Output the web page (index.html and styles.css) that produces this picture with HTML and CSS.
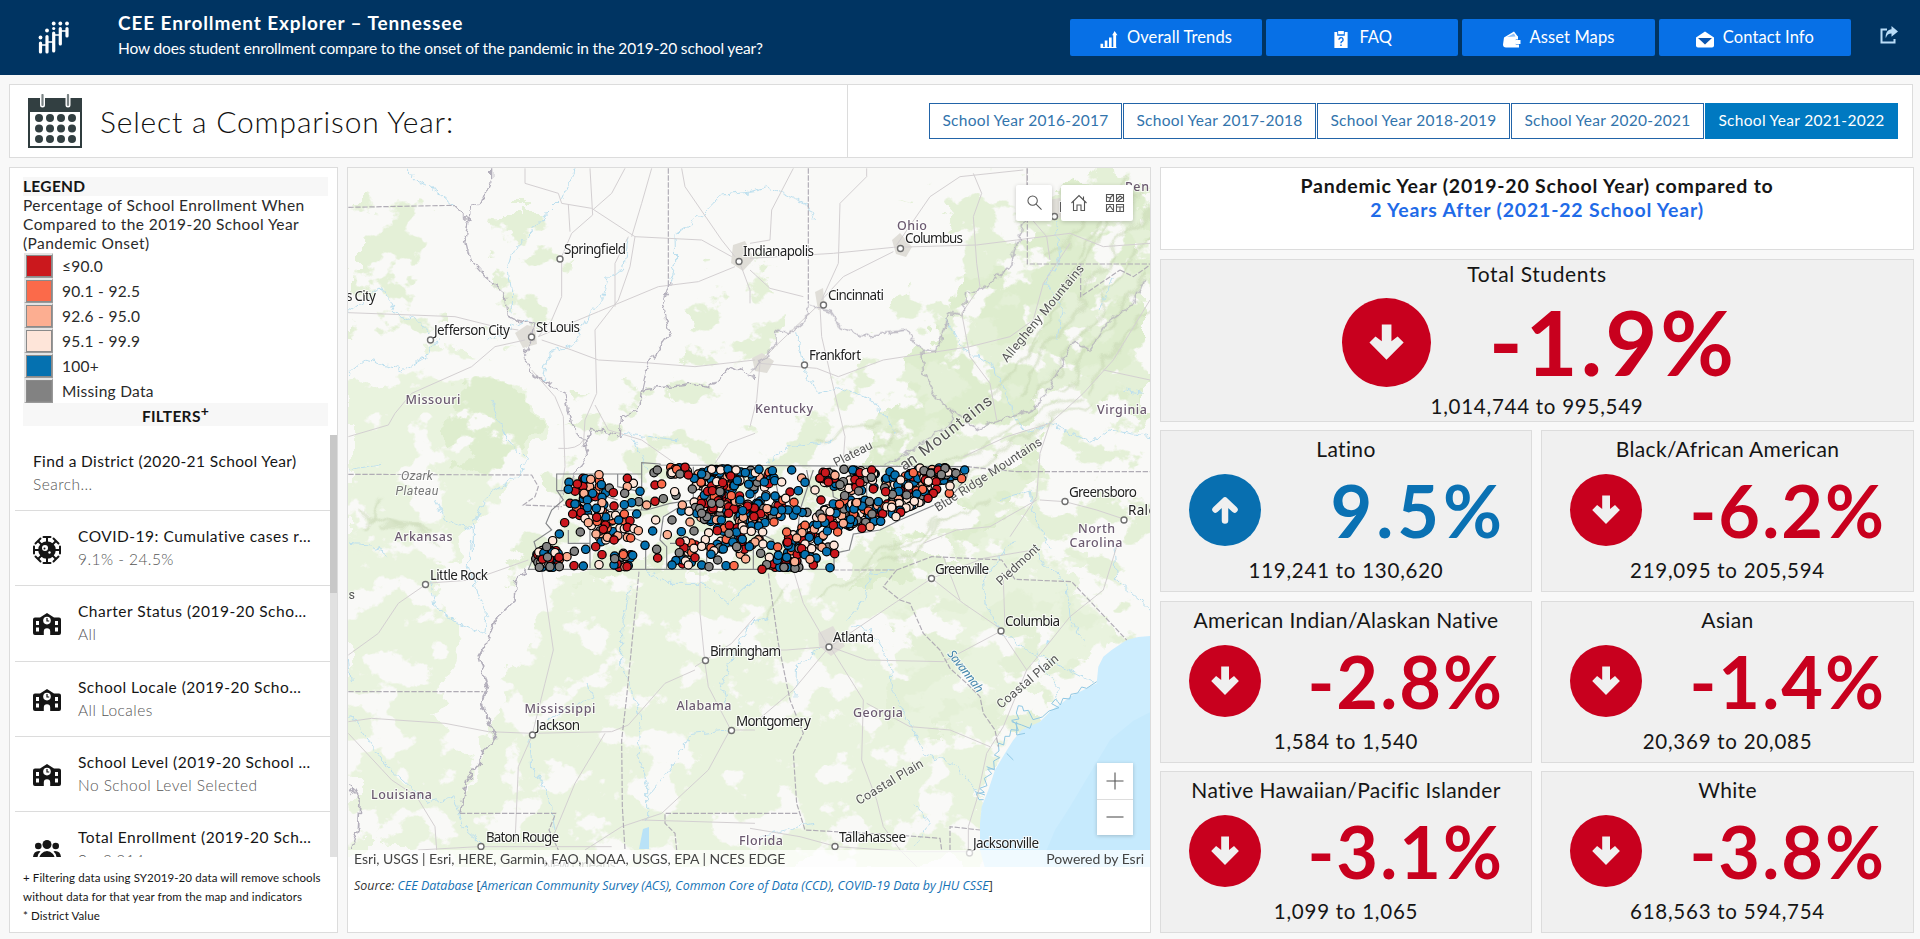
FILE: index.html
```html
<!DOCTYPE html>
<html lang="en">
<head>
<meta charset="utf-8">
<title>CEE Enrollment Explorer – Tennessee</title>
<link rel="stylesheet" href="styles.css">
</head>
<body>
<svg class="defs" width="0" height="0">
  <symbol id="school" viewBox="0 0 28 24"><path fill="#151515" d="M0 6.500a2 2 0 0 1 2-2h5L14 0l7 4.500h5a2 2 0 0 1 2 2V20a2 2 0 0 1-2 2h-8.800v-3.600a3.200 3.200 0 0 0-6.400 0V22H2a2 2 0 0 1-2-2z"/><circle cx="14" cy="7.600" r="3.800" fill="#fff"/><path d="M14 5v3h2.200" stroke="#151515" stroke-width="1.200" fill="none"/><path fill="#fff" d="M3 8h3v4H3zM3 14.500h3v4H3zM22 8h3v4h-3zM22 14.500h3v4h-3z"/></symbol>
  <symbol id="down" viewBox="0 0 72 72"><circle cx="36" cy="36" r="36" fill="#c8001e"/><path fill="#f0f0f0" d="M32.200 21.500h7.800v13.400l5-3.800 4.900 5L36 50 22.200 36.100l4.900-5 5.100 3.800z"/></symbol>
  <symbol id="up" viewBox="0 0 72 72"><circle cx="36" cy="36" r="36" fill="#086fb0"/><path fill="none" stroke="#f0f0f0" stroke-width="6.500" stroke-linecap="round" stroke-linejoin="round" d="M36 46.500V28M26.500 35.500L36 26.500l9.500 9"/></symbol>
</svg>

<header class="top">
  <svg class="logo" viewBox="0 0 34 34"><g stroke="#fff" stroke-linecap="round" stroke-width="3.200"><path d="M2.500 22v9M9 15.500V31M15.700 12v18M22.300 7.500v15.500M29 7.500v7.500"/></g><path d="M2.500 24h6M9 21h7M16 14h6M22 10h7" stroke="#fff" stroke-width="1.500"/><g fill="#fff"><circle cx="2.500" cy="16.500" r="1.900"/><circle cx="9" cy="9.500" r="1.900"/><circle cx="15.700" cy="2.500" r="1.900"/><circle cx="15.700" cy="7.500" r="1.600"/><circle cx="22.300" cy="2.500" r="1.900"/><circle cx="29" cy="2.500" r="1.900"/></g></svg>
  <div class="titles">
    <h1>CEE Enrollment Explorer – Tennessee</h1>
    <p>How does student enrollment compare to the onset of the pandemic in the 2019-20 school year?</p>
  </div>
  <nav class="links">
    <a><svg viewBox="0 0 16 16"><path fill="#fff" d="M0 12h2.500v3H0zM4 9h2.500v6H4zM8 6h2.500v9H8zM12 3h2.700v12H12zM11 4l2.300-4L16 4zM0 15h15v1H0z"/></svg><span class="n1">Overall Trends</span></a>
    <a><svg viewBox="0 0 16 18"><path fill="#fff" d="M1 1h3v4h8V1h3v17H1zM5 0h6v3.500H5z"/><path d="M5.800 9.200a2.200 2.200 0 1 1 3 2.100q-.8.400-.8 1.700M8 14.300v1.500" fill="none" stroke="#0a6fe6" stroke-width="1.500"/></svg><span>FAQ</span></a>
    <a><svg viewBox="0 0 18 16"><path fill="#fff" d="M1 6L11 0l3 4 1 1v3h-2a3 3 0 0 0 0 5h3v3H3a3 3 0 0 1-3-3zM13 8.500h4.500v4H13a2 2 0 0 1 0-4z"/><path d="M4 5.500l7-3.500 1.500 3z" fill="#8dbff8"/></svg><span>Asset Maps</span></a>
    <a><svg viewBox="0 0 18 16"><path fill="#fff" d="M0 6l9-6 9 6v8a2 2 0 0 1-2 2H2a2 2 0 0 1-2-2z"/><path fill="#0a55b0" d="M2 6.500h14L9 13z"/></svg><span>Contact Info</span></a>
  </nav>
  <svg class="share" viewBox="0 0 18 18"><path d="M7 3.500H1.500v13h13V13" fill="none" stroke="#b9dcf7" stroke-width="2"/><path fill="#b9dcf7" d="M11.500 0L18 5.500l-6.500 5.300V7.600C8.500 7.600 7 9 5.800 12.200 5 7 8 3.300 11.500 3.200z"/></svg>
</header>

<section class="selector">
  <div class="prompt">
    <svg class="cal" viewBox="0 0 54 54"><rect x="1" y="5" width="52" height="48" fill="#fff" stroke="#2f3c3e" stroke-width="2"/><path fill="#323f41" d="M0 4h54v14H0z"/><path d="M14.500 0v11M40 0v11" stroke="#fff" stroke-width="5" stroke-linecap="round"/><path d="M14.500 1v10M40 1v10" stroke="#7b8485" stroke-width="2.200" stroke-linecap="round"/><g fill="#323f41"><circle cx="11" cy="24" r="4"/><circle cx="22" cy="24" r="4"/><circle cx="33" cy="24" r="4"/><circle cx="44" cy="24" r="4"/><circle cx="11" cy="34.500" r="4"/><circle cx="22" cy="34.500" r="4"/><circle cx="33" cy="34.500" r="4"/><circle cx="44" cy="34.500" r="4"/><circle cx="11" cy="45" r="4"/><circle cx="22" cy="45" r="4"/><circle cx="33" cy="45" r="4"/><circle cx="44" cy="45" r="4"/></g></svg>
    <h2>Select a Comparison Year:</h2>
  </div>
  <div class="years">
    <button>School Year 2016-2017</button><button>School Year 2017-2018</button><button>School Year 2018-2019</button><button>School Year 2020-2021</button><button class="on">School Year 2021-2022</button>
  </div>
</section>

<main class="board">
  <aside class="side">
    <div class="legend">
      <h3>LEGEND</h3>
      <p>Percentage of School Enrollment When<br>Compared to the 2019-20 School Year<br>(Pandemic Onset)</p>
      <ul>
        <li><i class="sw c1"></i>≤90.0</li>
        <li><i class="sw c2"></i>90.1 - 92.5</li>
        <li><i class="sw c3"></i>92.6 - 95.0</li>
        <li><i class="sw c4"></i>95.1 - 99.9</li>
        <li><i class="sw c5"></i>100+</li>
        <li><i class="sw c6"></i>Missing Data</li>
      </ul>
      <h3 class="mid">FILTERS<sup>+</sup></h3>
    </div>
    <div class="filters">
      <div class="list">
        <div class="item first"><div><b>Find a District (2020-21 School Year)</b><span>Search...</span></div></div>
        <div class="item"><svg viewBox="0 0 28 28"><circle cx="14" cy="14" r="8.800" fill="#151515"/><g stroke="#151515" stroke-width="2" fill="none"><path d="M14 1v26M1 14h26M5 5l18 18M23 5L5 23"/><path d="M10.500 1h7M10.500 27h7M1 10.500v7M27 10.500v7M2.500 7.500l5-5M20.500 2.500l5 5M2.500 20.500l5 5M20.500 25.500l5-5" stroke-linecap="round"/></g><circle cx="12" cy="12" r="3" fill="#fff"/><circle cx="11.500" cy="12.500" r="1" fill="#151515"/><circle cx="16.500" cy="16.500" r="1.200" fill="#fff"/></svg><div><b>COVID-19: Cumulative cases r…</b><span>9.1% - 24.5%</span></div></div>
        <div class="item"><svg viewBox="0 0 28 24"><use href="#school"/></svg><div><b>Charter Status (2019-20 Scho…</b><span>All</span></div></div>
        <div class="item"><svg viewBox="0 0 28 24"><use href="#school"/></svg><div><b>School Locale (2019-20 Scho…</b><span>All Locales</span></div></div>
        <div class="item"><svg viewBox="0 0 28 24"><use href="#school"/></svg><div><b>School Level (2019-20 School …</b><span>No School Level Selected</span></div></div>
        <div class="item"><svg viewBox="0 0 28 22"><g fill="#151515"><circle cx="14" cy="4.500" r="4.500"/><circle cx="5.300" cy="6" r="3.300"/><circle cx="22.700" cy="6" r="3.300"/><path d="M6 20a8 9 0 0 1 16 0zM0 17q.5-6 6-6l1.500.500Q4.500 14 4.500 17zM28 17q-.5-6-6-6l-1.500.500q3 2.500 3 5.500z"/></g></svg><div><b>Total Enrollment (2019-20 Sch…</b><span>0 - 2,314</span></div></div>
      </div>
      <div class="track"><div class="thumb"></div></div>
    </div>
    <p class="notes">+ Filtering data using SY2019-20 data will remove schools<br>without data for that year from the map and indicators<br>* District Value</p>
  </aside>

  <section class="mapcard">
    <div class="map">
      <svg class="basemap" viewBox="348 168 802 699" width="802" height="699">
        <defs>
          <filter id="dense" x="348" y="168" width="802" height="699" filterUnits="userSpaceOnUse"><feTurbulence type="fractalNoise" baseFrequency=".022 .026" numOctaves="5" seed="8" result="n"/><feColorMatrix in="n" values="0 0 0 0 0  0 0 0 0 0  0 0 0 0 0  20 0 0 0 -8" result="m"/><feDisplacementMap in="SourceGraphic" in2="n" scale="60" xChannelSelector="G" yChannelSelector="B" result="d"/><feComposite in="d" in2="m" operator="in"/></filter>
          <filter id="sparse" x="348" y="168" width="802" height="699" filterUnits="userSpaceOnUse"><feTurbulence type="fractalNoise" baseFrequency=".024 .03" numOctaves="5" seed="21" result="n"/><feColorMatrix in="n" values="0 0 0 0 0  0 0 0 0 0  0 0 0 0 0  20 0 0 0 -10.600" result="m"/><feDisplacementMap in="SourceGraphic" in2="n" scale="60" xChannelSelector="G" yChannelSelector="B" result="d"/><feComposite in="d" in2="m" operator="in"/></filter>
          <filter id="ridges" x="348" y="168" width="802" height="699" filterUnits="userSpaceOnUse"><feGaussianBlur stdDeviation="1" result="b"/><feTurbulence type="fractalNoise" baseFrequency=".03" numOctaves="3" seed="3" result="n"/><feDisplacementMap in="b" in2="n" scale="26" xChannelSelector="R" yChannelSelector="G"/></filter>
          <filter id="wiggle" x="348" y="168" width="802" height="699" filterUnits="userSpaceOnUse"><feTurbulence type="fractalNoise" baseFrequency=".13" numOctaves="2" seed="5" result="n"/><feDisplacementMap in="SourceGraphic" in2="n" scale="9" xChannelSelector="R" yChannelSelector="G"/></filter>
        </defs>
        <path fill="#f9f9f7" d="M348 168h802v699H348z"/>
        <g fill="#e9f3de" filter="url(#dense)">
          <path d="M348 385L400 365L440 345L500 352L530 385L552 415L540 445L520 475L500 500L470 530L462 555L400 545L348 540z"/>
          <path d="M348 540L430 545L450 565L440 600L465 640L460 665L440 690L435 720L470 760L480 850H348z"/>
          <path d="M540 580L640 568L860 570L900 540L980 500L1020 520L1080 560L1110 640L1000 720L985 800L980 867H440L470 780L500 700L530 640z"/>
        </g>
        <g fill="#deedce" filter="url(#dense)">
          <path d="M965 280L1010 245L1080 185L1150 175L1150 420L1090 400L1040 390L990 440L920 470L860 470L905 400L915 350L945 310z"/>
          <path d="M850 590L880 560L960 500L1030 440L1060 420L1000 520L940 560L890 590z"/>
          <path d="M455 380L500 365L530 390L548 418L520 460L490 475L450 460z"/>
        </g>
        <g fill="#e4f0d7" filter="url(#sparse)">
          <path d="M348 200H440V340H348zM500 210H560V330H490z"/>
          <path d="M570 390H660L780 440L900 300L960 210L900 190L1150 168V620L1080 560L960 560L900 480H560z"/>
          <path d="M690 260L760 270L770 340L720 410L680 400z"/>
          <path d="M880 560H1150V640L1090 680L1000 740H900z"/>
          <path d="M560 470L960 460L880 570L500 580z"/>
        </g>
        <g fill="none" stroke="#c3d3ad" stroke-width="2.500" opacity=".6" filter="url(#ridges)">
          <path d="M1142 185L1090 250L1048 320L1020 370M1150 200L1105 262L1060 335L1015 395M1150 235L1110 290L1070 350L1030 400M1150 270L1105 330L1060 390M1085 215L1050 260M1150 300L1120 345L1085 390M1130 180L1075 260M1040 345L990 400M1090 400L1020 440L960 480L900 515M1080 395L1000 435L940 470M900 540L860 570M920 545L880 570M940 520L890 552M870 570L810 600M960 515L915 545M990 500L930 530M790 590L770 620M820 440L880 425M850 455L905 430M385 500L365 530M360 510L440 540M380 525L430 530"/>
        </g>
        <g fill="#e0ded8"><path d="M515 333l12-8 8 2 2 17-14 4zM733 245l12-4 9 18-11 12-12-8zM892 240l8-7 12 14-6 10-10-3zM815 292l8-4 2 20-7 2zM752 358l10-5 12 8-7 12-12-2zM818 633l15-7 12 20-14 10-12-10zM1048 200l12-2 5 18-12 4z"/></g>

        <g transform="translate(750 540) scale(.33333)">
          <path fill="#cdedfe" d="M1203 288L1165 291L1130 300L1085 330L1060 350L1045 380L1040 430L1000 450L960 470L935 490L905 510L870 545L815 570L790 600L765 640L735 690L715 750L695 800L690 850L690 930L705 985L1203 985z"/>
          <path fill="#c6eafd" d="M1203 515L1150 542L1080 600L1020 700L960 800L915 870L890 930L880 985H1203z"/>
          <path fill="none" stroke="#8fc7e3" stroke-width="3" d="M1040 425l-30 20-15-4-12 18-20 4-4 14-20-2-8 20-14-18-12 14 22 12-30 10-20 18-28 8-14-28-14 2-4-14-12-2-6 22 8 18-22 4 12 10 8 20-22-2-4 20-14 0-4 26-16-6 2 24-14 12 16 8-18 10 2 24-20 0 12 14-22 14 8 22-22 8 14 12-24 4 8 18 14 0"/>
          <path fill="none" stroke="#8fc7e3" stroke-width="3" d="M785 545l30 10 25 10 5-15M800 545l0 40 25-5M770 640l20 20M735 690l-25-10M705 765l-30-10"/>
        </g>

        <g class="river" filter="url(#wiggle)">
          <g transform="translate(345 160) scale(.33333)"><path d="M185 25L215 60L290 105L330 140M690 25L650 115L615 150L550 225L505 270L490 330L500 400L498 460M1230 95L1130 105L1070 170L990 220L992 310L975 370M850 230L835 330L790 350L770 420L730 460L690 550L610 580L595 660M10 640L60 600L170 630L240 590L280 535M10 458L110 380L150 460L215 480L250 520M430 545L500 500L550 480M440 720L480 830L545 900L520 950L430 1000L385 1090L385 1170M10 930L110 910M270 1020L300 1080L380 1110M860 830L910 930M830 820L1000 840"/></g>
          <g transform="translate(750 160) scale(.33333)"><path d="M0 95L55 80L170 130L195 180M140 520L165 640L210 700L260 680L370 720L440 820M590 480L640 570L720 610L760 680L790 770L830 820L900 790L960 820L1030 845L1080 810L1200 830M1090 350L1050 450M920 180L930 300L885 370L940 450L920 540M50 910L120 860L250 840M750 1020L840 990L855 1080L900 1160M1180 700L1120 690"/></g>
          <g transform="translate(345 540) scale(.33333)"><path d="M380 0L370 80L425 230L420 280L340 250L270 200L255 110M10 10L80 15L130 50M855 140L830 270L830 370L870 480L890 540L880 640L905 740L905 840M1230 240L1190 290L1130 430L1150 510M1150 570L1040 580L980 680L910 770M555 600L560 680L610 760L630 870M10 520L120 670L250 790L330 770M330 770L355 860L410 910M900 90L960 130L1080 130L1150 190L1230 120M10 360L20 430M725 430L745 470L610 540"/></g>
          <g transform="translate(750 540) scale(.33333)"><path d="M310 260L360 270L420 370L430 460L480 550L520 640L610 670L680 750M430 90L360 100L340 180L290 240M790 0L700 120L710 200L750 270L800 310L860 350L920 440L925 480M855 20L880 70L950 130L960 230L1000 310M860 340L1030 430M1090 0L1100 120L1200 210M0 250L60 230M135 470L140 380L220 320M495 790L540 850L490 920M20 890L190 850"/></g>
        </g>
        <path fill="#b9e2f7" d="M643 829l6-2v22h-10zM1047 640l3 1-4 4z"/>

        <g class="road">
          <g transform="translate(345 160) scale(.33333)"><path d="M540 25V70L640 100L650 130L740 145L870 230L970 235L1070 240L1160 290M735 25L743 165L680 220L650 290V410L620 480L580 530M870 230L855 320L820 420L750 510L755 700L720 780L715 860M670 135L675 215M743 150L800 100L840 25M1010 25L1020 80L1130 240L1170 290M920 25L890 130L860 230M10 458L200 465L330 470L450 500L520 510M580 530L760 455L940 380L1060 365L1170 320M590 540L680 570L760 600L900 608L1050 620L1230 600M540 540L450 560L380 620L200 700L150 760L130 795L10 830M560 630L630 710L655 770L660 920L640 1050M1185 310L1215 390L1215 430M750 735L790 810L890 840L990 910M1230 820L1150 850L1110 910M850 230L810 310L810 440M640 865Q700 870 715 840"/></g>
          <g transform="translate(750 160) scale(.33333)"><path d="M0 295L250 280L430 262L680 255L800 240L960 220L1060 260L1200 250M130 25L65 150L60 240L0 250M350 25L350 50L270 130L265 310L215 420M430 275L280 350L215 420M440 255L540 110L630 50L820 30M670 40L695 100L670 170L680 310L690 380L635 460L660 590L720 670L740 780M210 440L215 530L245 660L285 830L280 900M30 610L200 625L265 650L400 600L660 560L780 530L850 480L880 370L960 250M0 330L60 385L160 410M1200 420L1090 600L1000 700L900 790L770 830L640 890M1060 630L1200 660M0 640L75 560L200 440M0 800L20 720L30 610M900 790L870 880L860 1010L780 1130M870 1020L945 1025L1040 1050L1130 1080M830 25V160L890 230L900 300M520 1150L620 1110L720 1100L860 1020"/></g>
          <g transform="translate(345 540) scale(.33333)"><path d="M10 345L100 280L160 190L240 135M240 130L380 120L550 60M10 545L80 535L300 550L430 575L560 580L800 575L850 555L960 430L1050 390M590 90L625 330L600 430L560 590L520 680L510 910M10 580L140 720L215 770L270 860L275 930M1065 80V220L1080 370L1090 440L1155 565M780 580L690 730L620 900M1155 570L1090 690L950 820L890 840M720 930L830 860L890 840L1230 850M410 920L630 920L800 920M1050 380L1160 310L1230 230M220 930L400 920M1160 570L1230 570"/></g>
          <g transform="translate(750 540) scale(.33333)"><path d="M130 90L160 190L235 320M0 330L110 330L235 320M240 320L440 185L545 115M545 115L700 55L850 30M545 115L640 190L750 265M240 320L350 360L580 365L750 275M240 320L340 480L335 660L380 780L400 860L450 930L500 980M750 270L830 390L760 560L710 640L680 780L655 860L655 940M760 120L765 260M830 390L880 330L960 230L1060 150L1100 20M350 490L480 560L600 570L720 620M230 330L130 450L0 560M0 865L150 890L260 920L480 935L650 935M580 50L630 180"/></g>
        </g>

        <g class="border">
          <g transform="translate(345 160) scale(.33333)"><path d="M10 142L325 136M970 25V375M10 943L560 945L580 980L570 1010L535 1035L650 1040"/></g>
          <g transform="translate(750 160) scale(.33333)"><path d="M175 25V430M832 25V312H1200M992 312V410L1110 330M800 935L1200 935M650 920L800 935M1110 330L1150 350L1200 315"/></g>
          <g transform="translate(345 540) scale(.33333)"><path d="M10 455H415M345 820H632L612 870L640 930M882 95L845 470L830 600L832 800L840 930M1230 820H960V850L990 880L995 930"/></g>
          <g transform="translate(750 540) scale(.33333)"><path d="M55 100L85 310L120 480L160 580L130 640L140 790L165 870L440 885L570 895L575 930M0 820H145M250 90L440 90L545 50L755 60L795 118L965 125L1130 300M440 90L400 140L450 180L480 190L520 280L570 330L600 385L650 430L690 470L700 520L735 570L745 620M600 930V860L690 870"/></g>
        </g>
        <g class="shore" filter="url(#wiggle)">
          <g transform="translate(345 160) scale(.33333)"><path d="M440 25L440 60L415 120L380 140L375 180L325 136M370 180L360 240L375 300L420 350L480 400L490 470L510 480L570 490L560 540L535 590L560 640L660 700L680 800L715 840L725 890L690 940L650 1010M975 370L955 430L975 520L910 610L890 690L880 750L830 770L825 830L740 805L715 850M890 690L1040 670L1100 680L1150 620L1230 650"/></g>
          <g transform="translate(750 160) scale(.33333)"><path d="M175 430L170 480L120 520L80 510L75 560L30 600L10 630M180 435L240 455L270 500L340 530L400 520L470 510L515 570L560 570L600 460L640 470L650 400L690 390L780 320L800 250L835 160M515 570L520 640L570 730L610 750L600 790L490 870M610 750L680 810L720 790L850 750L900 680L970 540L1020 570L1070 490L1150 430L1180 360M490 870L400 920"/></g>
        </g>
        <g class="shore thick" filter="url(#wiggle)"><g transform="translate(345 540) scale(.33333)"><path d="M545 85L515 120L510 180L450 240L425 310L400 350L425 440L410 490L440 560L455 590L420 630L395 680L365 720L345 820M10 730L45 790L40 870L15 930"/></g></g>

        <g class="county" transform="translate(520 450) scale(.33333)">
          <path d="M110 72H365V38L420 42V45L1346 50L1340 82L1290 145L1140 210L1080 240L1000 252L988 300L942 310V358H25L50 300L42 275L95 240L78 220L95 180L130 150L110 120z"/>
          <path d="M185 72V150M293 72V110L360 125M365 72V180M110 122H200L293 150M130 165L290 180L380 180M145 240V280H210V240M210 280V355M377 280V358M430 200L420 270L440 290V358M380 180L450 160L520 150L520 50M450 280H560V358M600 50L620 150L700 170L720 60M560 290H700V358M700 240L760 270L780 358M760 60L780 160L840 180L880 60M860 60L870 110L900 150M840 180L830 270L850 358M930 50L940 140L1010 180M1040 50V150L1100 200M1110 60L1120 150M620 150L600 240M480 170L430 200M290 240L377 280M840 270L940 310M1180 60L1170 180"/>
        </g>
        <g class="place">
          <text x="564" y="253.500" textLength="62">Springfield</text><text x="743" y="256" textLength="71">Indianapolis</text><text x="905" y="243" textLength="58">Columbus</text><text x="828" y="300" textLength="56">Cincinnati</text><text x="809" y="359.500" textLength="52">Frankfort</text><text x="346" y="300.500" textLength="30">s City</text><text x="434" y="335" textLength="76">Jefferson City</text><text x="536" y="331.500" textLength="44">St Louis</text><text x="1069" y="496.500" textLength="68">Greensboro</text><text x="1128" y="514.500" textLength="28">Rale</text><text x="430" y="579.500" textLength="58">Little Rock</text><text x="935" y="574" textLength="54">Greenville</text><text x="1005" y="626" textLength="55">Columbia</text><text x="833" y="641.500" textLength="41">Atlanta</text><text x="710" y="655.500" textLength="71">Birmingham</text><text x="736" y="725.500" textLength="75">Montgomery</text><text x="536" y="730" textLength="44">Jackson</text><text x="486" y="841.500" textLength="73">Baton Rouge</text><text x="839" y="841.500" textLength="67">Tallahassee</text><text x="973" y="848" textLength="66">Jacksonville</text><text x="543" y="870" textLength="73" opacity=".5">New Orleans</text><text x="1059" y="212">P</text>
        </g>
        <g class="pin"><circle cx="560" cy="259" r="3"/><circle cx="739" cy="261.500" r="3"/><circle cx="900.500" cy="248.500" r="3"/><circle cx="823.500" cy="305" r="3"/><circle cx="804.500" cy="365" r="3"/><circle cx="430.500" cy="340" r="3"/><circle cx="531.500" cy="337" r="3"/><circle cx="1065" cy="501.500" r="3"/><circle cx="1124" cy="520" r="3"/><circle cx="425.500" cy="584.500" r="3"/><circle cx="931.500" cy="578.500" r="3"/><circle cx="1001" cy="631" r="3"/><circle cx="829" cy="647" r="3"/><circle cx="705.500" cy="660.500" r="3"/><circle cx="731.500" cy="730.500" r="3"/><circle cx="532.500" cy="735" r="3"/><circle cx="481" cy="846.500" r="3"/><circle cx="835" cy="846.500" r="3"/><circle cx="969.500" cy="853" r="3"/><circle cx="1054.500" cy="216.500" r="3"/></g>
        <g class="state"><text x="405.500" y="404" textLength="55">Missouri</text><text x="394.500" y="540.500" textLength="58">Arkansas</text><text x="897" y="230" textLength="30">Ohio</text><text x="1125" y="191" textLength="24">Pen</text><text x="755" y="413" textLength="58">Kentucky</text><text x="1097" y="413.500" textLength="50">Virginia</text><text x="1078" y="532.500" textLength="37">North</text><text x="1069.500" y="546.500" textLength="53">Carolina</text><text x="524.500" y="713" textLength="71">Mississippi</text><text x="676.500" y="710" textLength="55">Alabama</text><text x="853" y="717" textLength="50">Georgia</text><text x="371" y="798.500" textLength="61">Louisiana</text><text x="739" y="844.500" textLength="44">Florida</text></g>
        <g class="range"><text x="401" y="480" textLength="32" class="it">Ozark</text><text x="395.500" y="495" textLength="43" class="it">Plateau</text><text transform="translate(1007 363) rotate(-50.500)" textLength="122">Allegheny Mountains</text><text transform="translate(924 457) rotate(-38)" class="big" textLength="88">Mountains</text><text transform="translate(904 471) rotate(-33)" class="big" textLength="17">an</text><text transform="translate(836 467) rotate(-27)" textLength="42">Plateau</text><text transform="translate(938 512) rotate(-33)" textLength="125">Blue Ridge Mountains</text><text transform="translate(1001 586) rotate(-43)" textLength="54">Piedmont</text><text transform="translate(1001 709) rotate(-40)" textLength="76">Coastal Plain</text><text transform="translate(859 805) rotate(-31)" textLength="76">Coastal Plain</text><text transform="translate(947 654) rotate(52)" class="water" textLength="50">Savannah</text><text x="348.500" y="599">s</text></g>
        <g id="schools" transform="translate(520 450) scale(.33333)"></g>
      </svg>
      <div class="ctl search"><svg viewBox="0 0 16 16"><circle cx="6" cy="6" r="5" /><path d="M9.700 9.700L15.500 15.500"/></svg></div>
      <div class="ctl pair"><svg viewBox="0 0 18 18"><path d="M1.500 9L9 1.500 16.500 9M3.500 7.500V16.500H7V11h4v5.500h3.500V7.500M13.500 5.500V2.500"/></svg><svg viewBox="0 0 18 18"><path d="M.5.500h7v7h-7zM10.500.500h7v7h-7zM.5 10.500h7v7h-7zM10.500 10.500h7v7h-7zM1 3l3 1 3-3M3 7l2-3M11 5l3-3 3 2M12 7l4-3M1 16l3-4 3 4M11 13h6M14 13v4"/></svg></div>
      <div class="zoom"><div><svg viewBox="0 0 18 18"><path d="M9 .5v17M.5 9h17"/></svg></div><div><svg viewBox="0 0 18 18"><path d="M.5 9h17"/></svg></div></div>
      <div class="attrib"><span>Esri, USGS | Esri, HERE, Garmin, FAO, NOAA, USGS, EPA | NCES EDGE</span><span class="pw">Powered by Esri</span></div>
    </div>
    <p class="source">Source: <a>CEE Database</a> <em>[</em><a>American Community Survey (ACS)</a>, <a>Common Core of Data (CCD)</a>, <a>COVID-19 Data by JHU CSSE</a><em>]</em></p>
  </section>

  <section class="stats">
    <div class="card head"><p>Pandemic Year (2019-20 School Year) compared to</p><p class="blue">2 Years After (2021-22 School Year)</p></div>
    <div class="card total"><h4>Total Students</h4><div class="val"><svg><use href="#down"/></svg><strong>-1.9%</strong></div><p>1,014,744 to 995,549</p></div>
    <div class="card"><h4>Latino</h4><div class="val good"><svg><use href="#up"/></svg><strong>9.5%</strong></div><p>119,241 to 130,620</p></div>
    <div class="card"><h4>Black/African American</h4><div class="val"><svg><use href="#down"/></svg><strong>-6.2%</strong></div><p>219,095 to 205,594</p></div>
    <div class="card"><h4>American Indian/Alaskan Native</h4><div class="val"><svg><use href="#down"/></svg><strong>-2.8%</strong></div><p>1,584 to 1,540</p></div>
    <div class="card"><h4>Asian</h4><div class="val"><svg><use href="#down"/></svg><strong>-1.4%</strong></div><p>20,369 to 20,085</p></div>
    <div class="card"><h4>Native Hawaiian/Pacific Islander</h4><div class="val"><svg><use href="#down"/></svg><strong>-3.1%</strong></div><p>1,099 to 1,065</p></div>
    <div class="card"><h4>White</h4><div class="val"><svg><use href="#down"/></svg><strong>-3.8%</strong></div><p>618,563 to 594,754</p></div>
  </section>
</main>
<script src="schools.js"></script>
</body>
</html>
```
FILE: styles.css
```css
* { box-sizing: border-box; margin: 0; padding: 0; }
body { width: 1920px; height: 939px; overflow: hidden; background: #f8f8f8; color: #151515; font-family: Lato, "Liberation Sans", sans-serif; display: flex; flex-direction: column; }
.defs { display: block; height: 0; flex: none; }
.top { height: 75px; flex: none; background: #003462; color: #fff; display: flex; align-items: flex-start; padding-right: 22px; }
.logo { width: 34px; height: 34px; margin: 21px 0 0 38px; flex: none; }
.titles { margin: 11px 0 0 46px; flex: 1; white-space: nowrap; }
.titles h1 { font-size: 19px; line-height: 24px; font-weight: 700; letter-spacing: .88px; }
.titles p { font-size: 15.500px; line-height: 20px; margin-top: 3px; letter-spacing: -.15px; }
.links { display: flex; gap: 4px; margin-top: 19px; }
.links a { width: 192.300px; height: 37px; background: #0770e6; border-radius: 2px; display: flex; align-items: center; justify-content: center; gap: 9px; font-size: 16.500px; }
.links svg { width: 18px; height: 17px; margin-top: 3px; }
.links span { margin-top: -1px; letter-spacing: .1px; }
.share { width: 18px; height: 18px; margin: 26px 0 0 29px; }

.selector { display: flex; height: 74px; margin: 9px 7px 0 9px; background: #fff; border: 1px solid #dcdcdc; flex: none; }
.prompt { width: 838px; border-right: 1px solid #dcdcdc; display: flex; align-items: center; padding-left: 18px; }
.cal { width: 54px; height: 54px; margin-right: 18px; }
.prompt h2 { font-size: 30px; font-weight: 300; letter-spacing: .8px; color: #111; }
.years { flex: 1; display: flex; justify-content: flex-end; gap: 1px; padding: 18px 14px 0 0; }
.years button { width: 193px; height: 36px; border: 1px solid #2264a8; background: #fff; color: #3274ac; font: 15.500px Lato, sans-serif; letter-spacing: .3px; padding-bottom: 2px; white-space: nowrap; }
.years .on { background: #0079c1; border-color: #0079c1; color: #fff; }

.board { display: grid; grid-template-columns: 329px 804px 754px; column-gap: 9px; margin: 9px 7px 6px 9px; flex: 1; min-height: 0; }
.side, .mapcard { background: #fff; border: 1px solid #dcdcdc; min-height: 0; }
.side { display: flex; flex-direction: column; }
.legend { padding: 9px 9px 0 13px; font-size: 15.500px; flex: none; }
.legend h3 { background: #f7f7f7; font-size: 15.500px; line-height: 19px; height: 19px; letter-spacing: .3px; }
.legend p { line-height: 19px; letter-spacing: .43px; white-space: nowrap; color: #2a2a2a; }
.legend ul { list-style: none; }
.legend li { display: flex; height: 25px; align-items: center; gap: 9px; padding-left: 1px; letter-spacing: .3px; color: #2a2a2a; }
.legend .mid { text-align: center; height: 23px; line-height: 27px; }
.mid sup { font-size: 14px; line-height: 0; vertical-align: 6px; }
.sw { width: 29px; height: 25px; border: 2px solid #e4e4e4; border-right: 1px solid #999; border-bottom: 1px solid #999; outline: 0; box-shadow: inset 0 0 0 1px #8a8a8a; }
.c1 { background: #cb181d; } .c2 { background: #fb6a4a; } .c3 { background: #fcae91; } .c4 { background: #fee5d9; } .c5 { background: #0571b0; } .c6 { background: #828282; }
.filters { display: flex; height: 422px; margin-top: 9px; padding-left: 5px; flex: none; overflow: hidden; }
.list { flex: 1; min-width: 0; overflow: hidden; padding-top: 1px; }
.item { height: 75.200px; border-bottom: 1px solid #dcdcdc; display: flex; align-items: center; padding-left: 18px; }
.item svg { width: 28px; height: 28px; margin: 4px 17px 0 0; }
.item b { display: block; font-weight: 400; font-size: 15.500px; line-height: 22px; letter-spacing: .5px; white-space: nowrap; }
.item.first b { letter-spacing: .38px; }
.item span { display: block; color: #555; font-weight: 300; font-size: 15.500px; line-height: 22px; letter-spacing: .45px; margin-top: 1px; }
.item > div { margin-top: -1px; }
.track { width: 7px; background: #e1e1e1; }
.thumb { height: 158px; background: #c8c8c8; }
.notes { font-size: 11.500px; line-height: 19px; padding: 11px 0 0 13px; letter-spacing: .1px; white-space: nowrap; }

.map { position: relative; width: 802px; height: 699px; overflow: hidden; }
.basemap { display: block; font-family: "Noto Sans", sans-serif; }
.river path { fill: none; stroke: #bcdfee; stroke-width: 3; }
.road path { fill: none; stroke: #d3cfd1; stroke-width: 3; stroke-linejoin: round; }
.border path { fill: none; stroke: #b0acb5; stroke-width: 3.500; stroke-dasharray: 16 5; }
.shore path { fill: none; stroke: #b3afbb; stroke-width: 4; }
.shore.thick path { stroke-width: 5; }
.county path { fill: none; stroke: #85878a; stroke-width: 3.500; }
.place text { font-size: 13.500px; fill: #222; stroke: #fff; stroke-opacity: .8; stroke-width: 2px; paint-order: stroke; }
.pin circle { fill: #fff; stroke: #707070; stroke-width: 1.400; }
.state text { font-size: 12.500px; font-weight: 500; fill: #6b5a70; stroke: #fff; stroke-opacity: .7; stroke-width: 2px; paint-order: stroke; }
.range text { font-family: Roboto, sans-serif; font-size: 12.500px; fill: #555; stroke: #fff; stroke-opacity: .6; stroke-width: 2px; paint-order: stroke; }
.range .it { font-style: italic; fill: #777; }
.range .big { font-size: 16px; }
.range .water { font-family: "Noto Sans", sans-serif; font-style: italic; font-size: 12px; fill: #4586ad; }
#schools circle { stroke: #000; stroke-width: 3.600; }
.ctl, .zoom { position: absolute; background: #fff; box-shadow: 0 1px 4px rgba(0,0,0,.2); display: flex; }
.ctl { height: 36px; top: 17px; border-radius: 2px; align-items: center; justify-content: space-around; }
.ctl svg, .zoom svg { fill: none; stroke: #555; stroke-width: 1.100; width: 18px; height: 18px; overflow: visible; }
.search { width: 36px; left: 668px; }
.search svg { width: 15px; height: 15px; margin-top: -2px; }
.pair { width: 72px; left: 713px; }
.zoom { flex-direction: column; width: 36px; height: 72px; left: 749px; top: 595px; }
.zoom div { flex: 1; display: flex; align-items: center; justify-content: center; }
.zoom div + div { border-top: 1px solid #ddd; }
.attrib { position: absolute; left: 0; right: 0; bottom: 0; height: 17px; background: rgba(255,255,255,.7); display: flex; justify-content: space-between; padding: 0 6px; font-size: 14px; line-height: 18px; letter-spacing: -.05px; color: #444; white-space: nowrap; }
.source { font: italic 12.450px/18px "Open Sans", sans-serif; padding: 10px 0 0 6px; color: #333; white-space: nowrap; }
.source a { color: #1472b5; }
.source em { font-style: normal; }

.stats { display: grid; grid-template-columns: 372px 373px; grid-template-rows: 83px 163px 162px 162px 162px; column-gap: 9px; row-gap: 8.500px; }
.card { background: #f0f0f0; border: 1px solid #dcdcdc; text-align: center; padding-top: 6px; white-space: nowrap; }
.card h4 { font-weight: 400; font-size: 21px; line-height: 24px; letter-spacing: .35px; }
.card p { font-size: 20.500px; line-height: 24px; letter-spacing: .75px; }
.card.head { grid-column: 1 / 3; background: #fff; padding-top: 6px; }
.card.head p { font-size: 19.500px; font-weight: 700; letter-spacing: .8px; }
.card.head .blue { color: #1f6be8; }
.val { display: flex; height: 96px; align-items: center; justify-content: space-between; padding: 0 27px 0 28px; color: #c8001e; margin-top: 1px; }
.val svg { width: 72px; height: 72px; flex: none; }
.val strong { font-size: 72px; line-height: 90px; font-weight: 700; letter-spacing: 2px; }
.val.good { color: #0a71b3; }
.good strong { letter-spacing: 4px; margin-right: -2px; }
.card.total { grid-column: 1 / 3; padding-top: 2px; }
.card.total h4 { letter-spacing: .6px; }
.total .val { height: 110px; justify-content: flex-start; gap: 58px; padding: 0 0 0 181px; margin-top: 0; }
.total .val svg { width: 89px; height: 89px; margin-top: 4px; }
.total .val strong { font-size: 90px; letter-spacing: 3px; }
.card.total p { margin-top: -2px; }
```
FILE: schools.js
```js
// School markers: [x, y, class] in the marker layer's own units.
const fills = { r: '#cb181d', o: '#fb6a4a', s: '#fcae91', p: '#fee5d9', b: '#0571b0', g: '#828282' };
const layer = document.getElementById('schools');
function dot(x, y, k) {
  const c = document.createElementNS('http://www.w3.org/2000/svg', 'circle');
  c.setAttribute('cx', x); c.setAttribute('cy', y); c.setAttribute('r', 12.5);
  c.setAttribute('fill', fills[k]);
  layer.appendChild(c);
}
let seed = 77;
const rnd = () => (seed = (seed * 16807) % 2147483647) / 2147483647;
const mix = 'bbbbbbrrrroossppppgg';
// Dense urban clusters: centre, spread, count.
const clusters = [
  [85, 325, 38, 30, 75], [265, 235, 55, 45, 22], [475, 65, 30, 20, 12], [590, 90, 70, 40, 60],
  [575, 170, 55, 50, 70], [690, 180, 70, 50, 40], [640, 270, 90, 50, 36], [700, 85, 80, 35, 24],
  [795, 345, 50, 18, 28], [860, 290, 65, 50, 40], [1000, 190, 90, 45, 85], [1000, 90, 90, 35, 30],
  [1160, 120, 80, 55, 55], [1245, 75, 70, 25, 45], [920, 80, 25, 25, 10], [1130, 180, 50, 30, 20],
  [500, 310, 40, 40, 14], [760, 170, 60, 40, 16], [210, 110, 60, 40, 16], [310, 330, 30, 25, 12],
  [860, 215, 60, 30, 10], [230, 180, 70, 35, 14]
];
for (const [cx, cy, sx, sy, n] of clusters) {
  for (let i = 0; i < n; i++) {
    const a = rnd() * 6.283, q = Math.sqrt(rnd());
    let x = cx + Math.cos(a) * q * sx, y = cy + Math.sin(a) * q * sy;
    y = Math.max(50, Math.min(352, y));
    if (x > 940) y = Math.min(y, 240 - (x - 1000) * 0.42);
    dot(x.toFixed(1), y.toFixed(1), mix[Math.floor(rnd() * mix.length)]);
  }
}
const placed = `147 97 b,172 102 r,145 118 b,196 86 b,212 88 s,237 74 s,192 130 s,218 130 b,244 104 b,268 114 g,280 128 r,202 150 b,246 142 b,246 158 s,150 160 r,165 162 b,202 173 b,229 175 b,282 168 r,158 192 r,183 188 r,195 205 p,205 218 s,230 202 r,134 218 r,118 252 b,181 246 g,256 225 r,250 238 r,228 252 s,262 262 s,282 270 r,300 234 p,313 236 p,313 192 o,330 212 r,296 210 b,322 232 r,342 236 p,355 242 s,322 262 s,332 264 o,350 192 b,340 100 p,322 85 r,322 110 s,314 130 g,360 124 b,380 165 s,356 155 g,335 158 b,313 164 b,405 154 r,430 146 g,405 105 r,425 102 o,402 68 g,412 60 g,407 210 p,456 210 g,398 243 b,442 254 s,375 286 b,410 298 g,413 324 r,163 304 g,141 320 s,197 298 b,227 290 r,246 314 r,162 347 r,190 348 b,237 344 p,282 345 b,321 350 r,338 316 b,284 326 g,310 314 o,105 308 p,117 322 r,98 272 p,80 290 g,90 350 g,118 350 g,58 352 g,456 345 b,505 345 p,525 323 r,522 295 p,480 276 r,478 308 g,545 345 b,567 350 g,593 330 g,573 313 b,618 347 b,642 347 o,556 269 p,545 289 p,484 183 b,507 184 p,510 216 s,484 245 b,522 243 g,468 136 g,464 125 p,487 165 s,456 68 p,470 58 o,480 72 g,505 75 r,517 117 g,545 72 b,575 58 p,602 60 p,624 58 b,648 60 p,632 78 r,676 68 b,706 68 p,717 58 b,757 62 b,815 60 b,590 95 p,608 98 r,563 124 r,577 122 r,600 125 g,634 137 o,660 150 b,690 132 b,652 92 b,733 96 b,764 92 b,785 96 p,845 84 s,855 97 b,810 126 r,835 122 b,797 145 p,765 138 b,737 140 b,822 157 o,830 180 b,804 180 b,785 180 b,762 184 b,741 176 s,762 216 o,735 218 b,703 174 r,702 200 r,683 168 r,670 202 s,668 182 b,626 190 r,604 210 b,628 226 r,627 250 g,592 242 r,575 160 g,600 160 g,545 190 g,716 228 b,728 246 p,672 240 p,694 244 p,667 268 b,650 290 g,688 290 b,722 310 g,729 282 p,753 286 b,773 291 o,748 322 p,740 344 g,726 358 r,677 327 s,800 246 o,855 226 o,846 248 s,868 262 b,895 272 b,830 264 s,855 282 p,845 296 r,875 296 p,888 324 b,880 345 r,855 314 b,870 328 s,906 292 s,920 305 b,942 286 p,944 311 r,930 353 b,910 256 s,922 243 b,940 226 r,953 246 o,792 352 g,825 355 g,800 322 b,775 316 b,824 335 s,903 150 r,900 192 g,906 204 s,885 120 p,900 84 r,916 68 r,925 96 r,945 76 s,972 58 g,998 60 b,970 95 g,960 104 g,1020 68 r,1038 68 p,1055 60 r,1054 82 g,1020 98 r,1016 123 g,974 137 g,1060 117 r,1097 125 r,1110 65 b,1125 75 b,1142 90 p,1166 76 b,1180 68 o,1160 135 g,1166 108 p,1200 54 p,1212 62 g,1232 70 g,1225 94 p,1208 118 o,1255 60 r,1275 55 g,1264 74 g,1308 70 g,1334 60 b,1325 86 o,1288 130 o,1290 108 p,1250 118 r,1240 130 r,1224 145 r,1190 132 b,1183 154 p,1142 187 r,1128 200 p,1115 172 p,1082 214 b,1056 192 g,1050 230 s,1026 235 r,1002 177 b,1010 158 s,1075 155 b,992 208 b,970 220 s,948 190 b,930 185 p`;
for (const item of placed.split(',')) {
  const [x, y, k] = item.trim().split(' ');
  dot(x, y, k);
}
```
